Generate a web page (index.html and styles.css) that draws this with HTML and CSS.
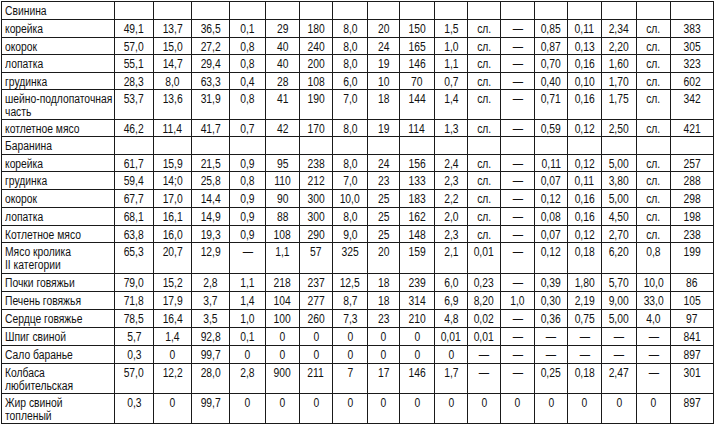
FILE: index.html
```html
<!DOCTYPE html>
<html lang="ru">
<head>
<meta charset="utf-8">
<link rel="stylesheet" href="styles.css">
</head>
<body>
<table class="tbl">
<colgroup>
<col class="c-name"><col class="c39"><col class="c38"><col class="c38"><col class="c36"><col class="c34"><col class="c33"><col class="c35"><col class="c32"><col class="c35"><col class="c33"><col class="c33"><col class="c34"><col class="c33"><col class="c34"><col class="c35"><col class="c34"><col class="c43">
</colgroup>
<tbody>
<tr class="h18"><td class="name"><span>Свинина</span></td><td></td><td></td><td></td><td></td><td></td><td></td><td></td><td></td><td></td><td></td><td></td><td></td><td></td><td></td><td></td><td></td><td></td></tr>
<tr class="h18"><td class="name"><span>корейка</span></td><td><span>49,1</span></td><td><span>13,7</span></td><td><span>36,5</span></td><td><span>0,1</span></td><td><span>29</span></td><td><span>180</span></td><td><span>8,0</span></td><td><span>20</span></td><td><span>150</span></td><td><span>1,5</span></td><td><span>сл.</span></td><td><span>—</span></td><td><span>0,85</span></td><td><span>0,11</span></td><td><span>2,34</span></td><td><span>сл.</span></td><td><span>383</span></td></tr>
<tr class="h17"><td class="name"><span>окорок</span></td><td><span>57,0</span></td><td><span>15,0</span></td><td><span>27,2</span></td><td><span>0,8</span></td><td><span>40</span></td><td><span>240</span></td><td><span>8,0</span></td><td><span>24</span></td><td><span>165</span></td><td><span>1,0</span></td><td><span>сл.</span></td><td><span>—</span></td><td><span>0,87</span></td><td><span>0,13</span></td><td><span>2,20</span></td><td><span>сл.</span></td><td><span>305</span></td></tr>
<tr class="h18"><td class="name"><span>лопатка</span></td><td><span>55,1</span></td><td><span>14,7</span></td><td><span>29,4</span></td><td><span>0,8</span></td><td><span>40</span></td><td><span>200</span></td><td><span>8,0</span></td><td><span>19</span></td><td><span>146</span></td><td><span>1,1</span></td><td><span>сл.</span></td><td><span>—</span></td><td><span>0,70</span></td><td><span>0,16</span></td><td><span>1,60</span></td><td><span>сл.</span></td><td><span>323</span></td></tr>
<tr class="h17"><td class="name"><span>грудинка</span></td><td><span>28,3</span></td><td><span>8,0</span></td><td><span>63,3</span></td><td><span>0,4</span></td><td><span>28</span></td><td><span>108</span></td><td><span>6,0</span></td><td><span>10</span></td><td><span>70</span></td><td><span>0,7</span></td><td><span>сл.</span></td><td><span>—</span></td><td><span>0,40</span></td><td><span>0,10</span></td><td><span>1,70</span></td><td><span>сл.</span></td><td><span>602</span></td></tr>
<tr class="h30"><td class="name"><span>шейно-подлопаточная<br>часть</span></td><td><span>53,7</span></td><td><span>13,6</span></td><td><span>31,9</span></td><td><span>0,8</span></td><td><span>41</span></td><td><span>190</span></td><td><span>7,0</span></td><td><span>18</span></td><td><span>144</span></td><td><span>1,4</span></td><td><span>сл.</span></td><td><span>—</span></td><td><span>0,71</span></td><td><span>0,16</span></td><td><span>1,75</span></td><td><span>сл.</span></td><td><span>342</span></td></tr>
<tr class="h17"><td class="name"><span>котлетное мясо</span></td><td><span>46,2</span></td><td><span>11,4</span></td><td><span>41,7</span></td><td><span>0,7</span></td><td><span>42</span></td><td><span>170</span></td><td><span>8,0</span></td><td><span>19</span></td><td><span>114</span></td><td><span>1,3</span></td><td><span>сл.</span></td><td><span>—</span></td><td><span>0,59</span></td><td><span>0,12</span></td><td><span>2,50</span></td><td><span>сл.</span></td><td><span>421</span></td></tr>
<tr class="h18"><td class="name"><span>Баранина</span></td><td></td><td></td><td></td><td></td><td></td><td></td><td></td><td></td><td></td><td></td><td></td><td></td><td></td><td></td><td></td><td></td><td></td></tr>
<tr class="h17"><td class="name"><span>корейка</span></td><td><span>61,7</span></td><td><span>15,9</span></td><td><span>21,5</span></td><td><span>0,9</span></td><td><span>95</span></td><td><span>238</span></td><td><span>8,0</span></td><td><span>24</span></td><td><span>156</span></td><td><span>2,4</span></td><td><span>сл.</span></td><td><span>—</span></td><td><span>0,11</span></td><td><span>0,12</span></td><td><span>5,00</span></td><td><span>сл.</span></td><td><span>257</span></td></tr>
<tr class="h18"><td class="name"><span>грудинка</span></td><td><span>59,4</span></td><td><span>14;0</span></td><td><span>25,8</span></td><td><span>0,8</span></td><td><span>110</span></td><td><span>212</span></td><td><span>7,0</span></td><td><span>23</span></td><td><span>133</span></td><td><span>2,3</span></td><td><span>сл.</span></td><td><span>—</span></td><td><span>0,07</span></td><td><span>0,11</span></td><td><span>3,80</span></td><td><span>сл.</span></td><td><span>288</span></td></tr>
<tr class="h18"><td class="name"><span>окорок</span></td><td><span>67,7</span></td><td><span>17,0</span></td><td><span>14,4</span></td><td><span>0,9</span></td><td><span>90</span></td><td><span>300</span></td><td><span>10,0</span></td><td><span>25</span></td><td><span>183</span></td><td><span>2,2</span></td><td><span>сл.</span></td><td><span>—</span></td><td><span>0,12</span></td><td><span>0,16</span></td><td><span>5,00</span></td><td><span>сл.</span></td><td><span>298</span></td></tr>
<tr class="h18"><td class="name"><span>лопатка</span></td><td><span>68,1</span></td><td><span>16,1</span></td><td><span>14,9</span></td><td><span>0,9</span></td><td><span>88</span></td><td><span>300</span></td><td><span>8,0</span></td><td><span>25</span></td><td><span>162</span></td><td><span>2,0</span></td><td><span>сл.</span></td><td><span>—</span></td><td><span>0,08</span></td><td><span>0,16</span></td><td><span>4,50</span></td><td><span>сл.</span></td><td><span>198</span></td></tr>
<tr class="h17"><td class="name"><span>Котлетное мясо</span></td><td><span>63,8</span></td><td><span>16,0</span></td><td><span>19,3</span></td><td><span>0,9</span></td><td><span>108</span></td><td><span>290</span></td><td><span>9,0</span></td><td><span>25</span></td><td><span>148</span></td><td><span>2,3</span></td><td><span>сл.</span></td><td><span>—</span></td><td><span>0,07</span></td><td><span>0,12</span></td><td><span>2,70</span></td><td><span>сл.</span></td><td><span>238</span></td></tr>
<tr class="h31"><td class="name"><span>Мясо кролика<br>II категории</span></td><td><span>65,3</span></td><td><span>20,7</span></td><td><span>12,9</span></td><td><span>—</span></td><td><span>1,1</span></td><td><span>57</span></td><td><span>325</span></td><td><span>20</span></td><td><span>159</span></td><td><span>2,1</span></td><td><span>0,01</span></td><td><span>—</span></td><td><span>0,12</span></td><td><span>0,18</span></td><td><span>6,20</span></td><td><span>0,8</span></td><td><span>199</span></td></tr>
<tr class="h18"><td class="name"><span>Почки говяжьи</span></td><td><span>79,0</span></td><td><span>15,2</span></td><td><span>2,8</span></td><td><span>1,1</span></td><td><span>218</span></td><td><span>237</span></td><td><span>12,5</span></td><td><span>18</span></td><td><span>239</span></td><td><span>6,0</span></td><td><span>0,23</span></td><td><span>—</span></td><td><span>0,39</span></td><td><span>1,80</span></td><td><span>5,70</span></td><td><span>10,0</span></td><td><span>86</span></td></tr>
<tr class="h18"><td class="name"><span>Печень говяжья</span></td><td><span>71,8</span></td><td><span>17,9</span></td><td><span>3,7</span></td><td><span>1,4</span></td><td><span>104</span></td><td><span>277</span></td><td><span>8,7</span></td><td><span>18</span></td><td><span>314</span></td><td><span>6,9</span></td><td><span>8,20</span></td><td><span>1,0</span></td><td><span>0,30</span></td><td><span>2,19</span></td><td><span>9,00</span></td><td><span>33,0</span></td><td><span>105</span></td></tr>
<tr class="h18"><td class="name"><span>Сердце говяжье</span></td><td><span>78,5</span></td><td><span>16,4</span></td><td><span>3,5</span></td><td><span>1,0</span></td><td><span>100</span></td><td><span>260</span></td><td><span>7,3</span></td><td><span>23</span></td><td><span>210</span></td><td><span>4,8</span></td><td><span>0,02</span></td><td><span>—</span></td><td><span>0,36</span></td><td><span>0,75</span></td><td><span>5,00</span></td><td><span>4,0</span></td><td><span>97</span></td></tr>
<tr class="h18"><td class="name"><span>Шпиг свиной</span></td><td><span>5,7</span></td><td><span>1,4</span></td><td><span>92,8</span></td><td><span>0,1</span></td><td><span>0</span></td><td><span>0</span></td><td><span>0</span></td><td><span>0</span></td><td><span>0</span></td><td><span>0,01</span></td><td><span>0,01</span></td><td><span>—</span></td><td><span>—</span></td><td><span>—</span></td><td><span>—</span></td><td><span>—</span></td><td><span>841</span></td></tr>
<tr class="h18"><td class="name"><span>Сало баранье</span></td><td><span>0,3</span></td><td><span>0</span></td><td><span>99,7</span></td><td><span>0</span></td><td><span>0</span></td><td><span>0</span></td><td><span>0</span></td><td><span>0</span></td><td><span>0</span></td><td><span>0</span></td><td><span>—</span></td><td><span>—</span></td><td><span>—</span></td><td><span>—</span></td><td><span>—</span></td><td><span>—</span></td><td><span>897</span></td></tr>
<tr class="h29"><td class="name"><span>Колбаса<br>любительская</span></td><td><span>57,0</span></td><td><span>12,2</span></td><td><span>28,0</span></td><td><span>2,8</span></td><td><span>900</span></td><td><span>211</span></td><td><span>7</span></td><td><span>17</span></td><td><span>146</span></td><td><span>1,7</span></td><td><span>—</span></td><td><span>—</span></td><td><span>0,25</span></td><td><span>0,18</span></td><td><span>2,47</span></td><td><span>—</span></td><td><span>301</span></td></tr>
<tr class="h30"><td class="name"><span>Жир свиной<br>топленый</span></td><td><span>0,3</span></td><td><span>0</span></td><td><span>99,7</span></td><td><span>0</span></td><td><span>0</span></td><td><span>0</span></td><td><span>0</span></td><td><span>0</span></td><td><span>0</span></td><td><span>0</span></td><td><span>0</span></td><td><span>0</span></td><td><span>0</span></td><td><span>0</span></td><td><span>0</span></td><td><span>0</span></td><td><span>897</span></td></tr>
</tbody>
</table>
</body>
</html>
```
FILE: styles.css
```css
html, body {
  margin: 0;
  padding: 0;
  background: #fff;
}
body {
  padding: 1px 0 0 1px;
}
.tbl {
  border-collapse: collapse;
  table-layout: fixed;
  width: 713px;
  font-family: "Liberation Sans", Arial, sans-serif;
  font-size: 12px;
  line-height: 13px;
  color: #111;
}
.tbl td {
  border: 1px solid #1a1a1a;
  padding: 3px 0 0 0;
  vertical-align: top;
  text-align: center;
  overflow: hidden;
  white-space: nowrap;
}
.tbl td span {
  display: inline-block;
  transform: scaleX(0.86);
  transform-origin: 50% 0;
}
.tbl td.name {
  text-align: left;
  padding-left: 3px;
}
.tbl td.name span {
  transform-origin: 0 0;
}
.h17 { height: 17px; }
.h18 { height: 18px; }
.h29 { height: 29px; }
.h30 { height: 30px; }
.h31 { height: 31px; }
.c-name { width: 113px; }
.c39 { width: 39px; }
.c38 { width: 38px; }
.c36 { width: 36px; }
.c35 { width: 35px; }
.c34 { width: 34px; }
.c33 { width: 33px; }
.c32 { width: 32px; }
.c43 { width: 43px; }
```
